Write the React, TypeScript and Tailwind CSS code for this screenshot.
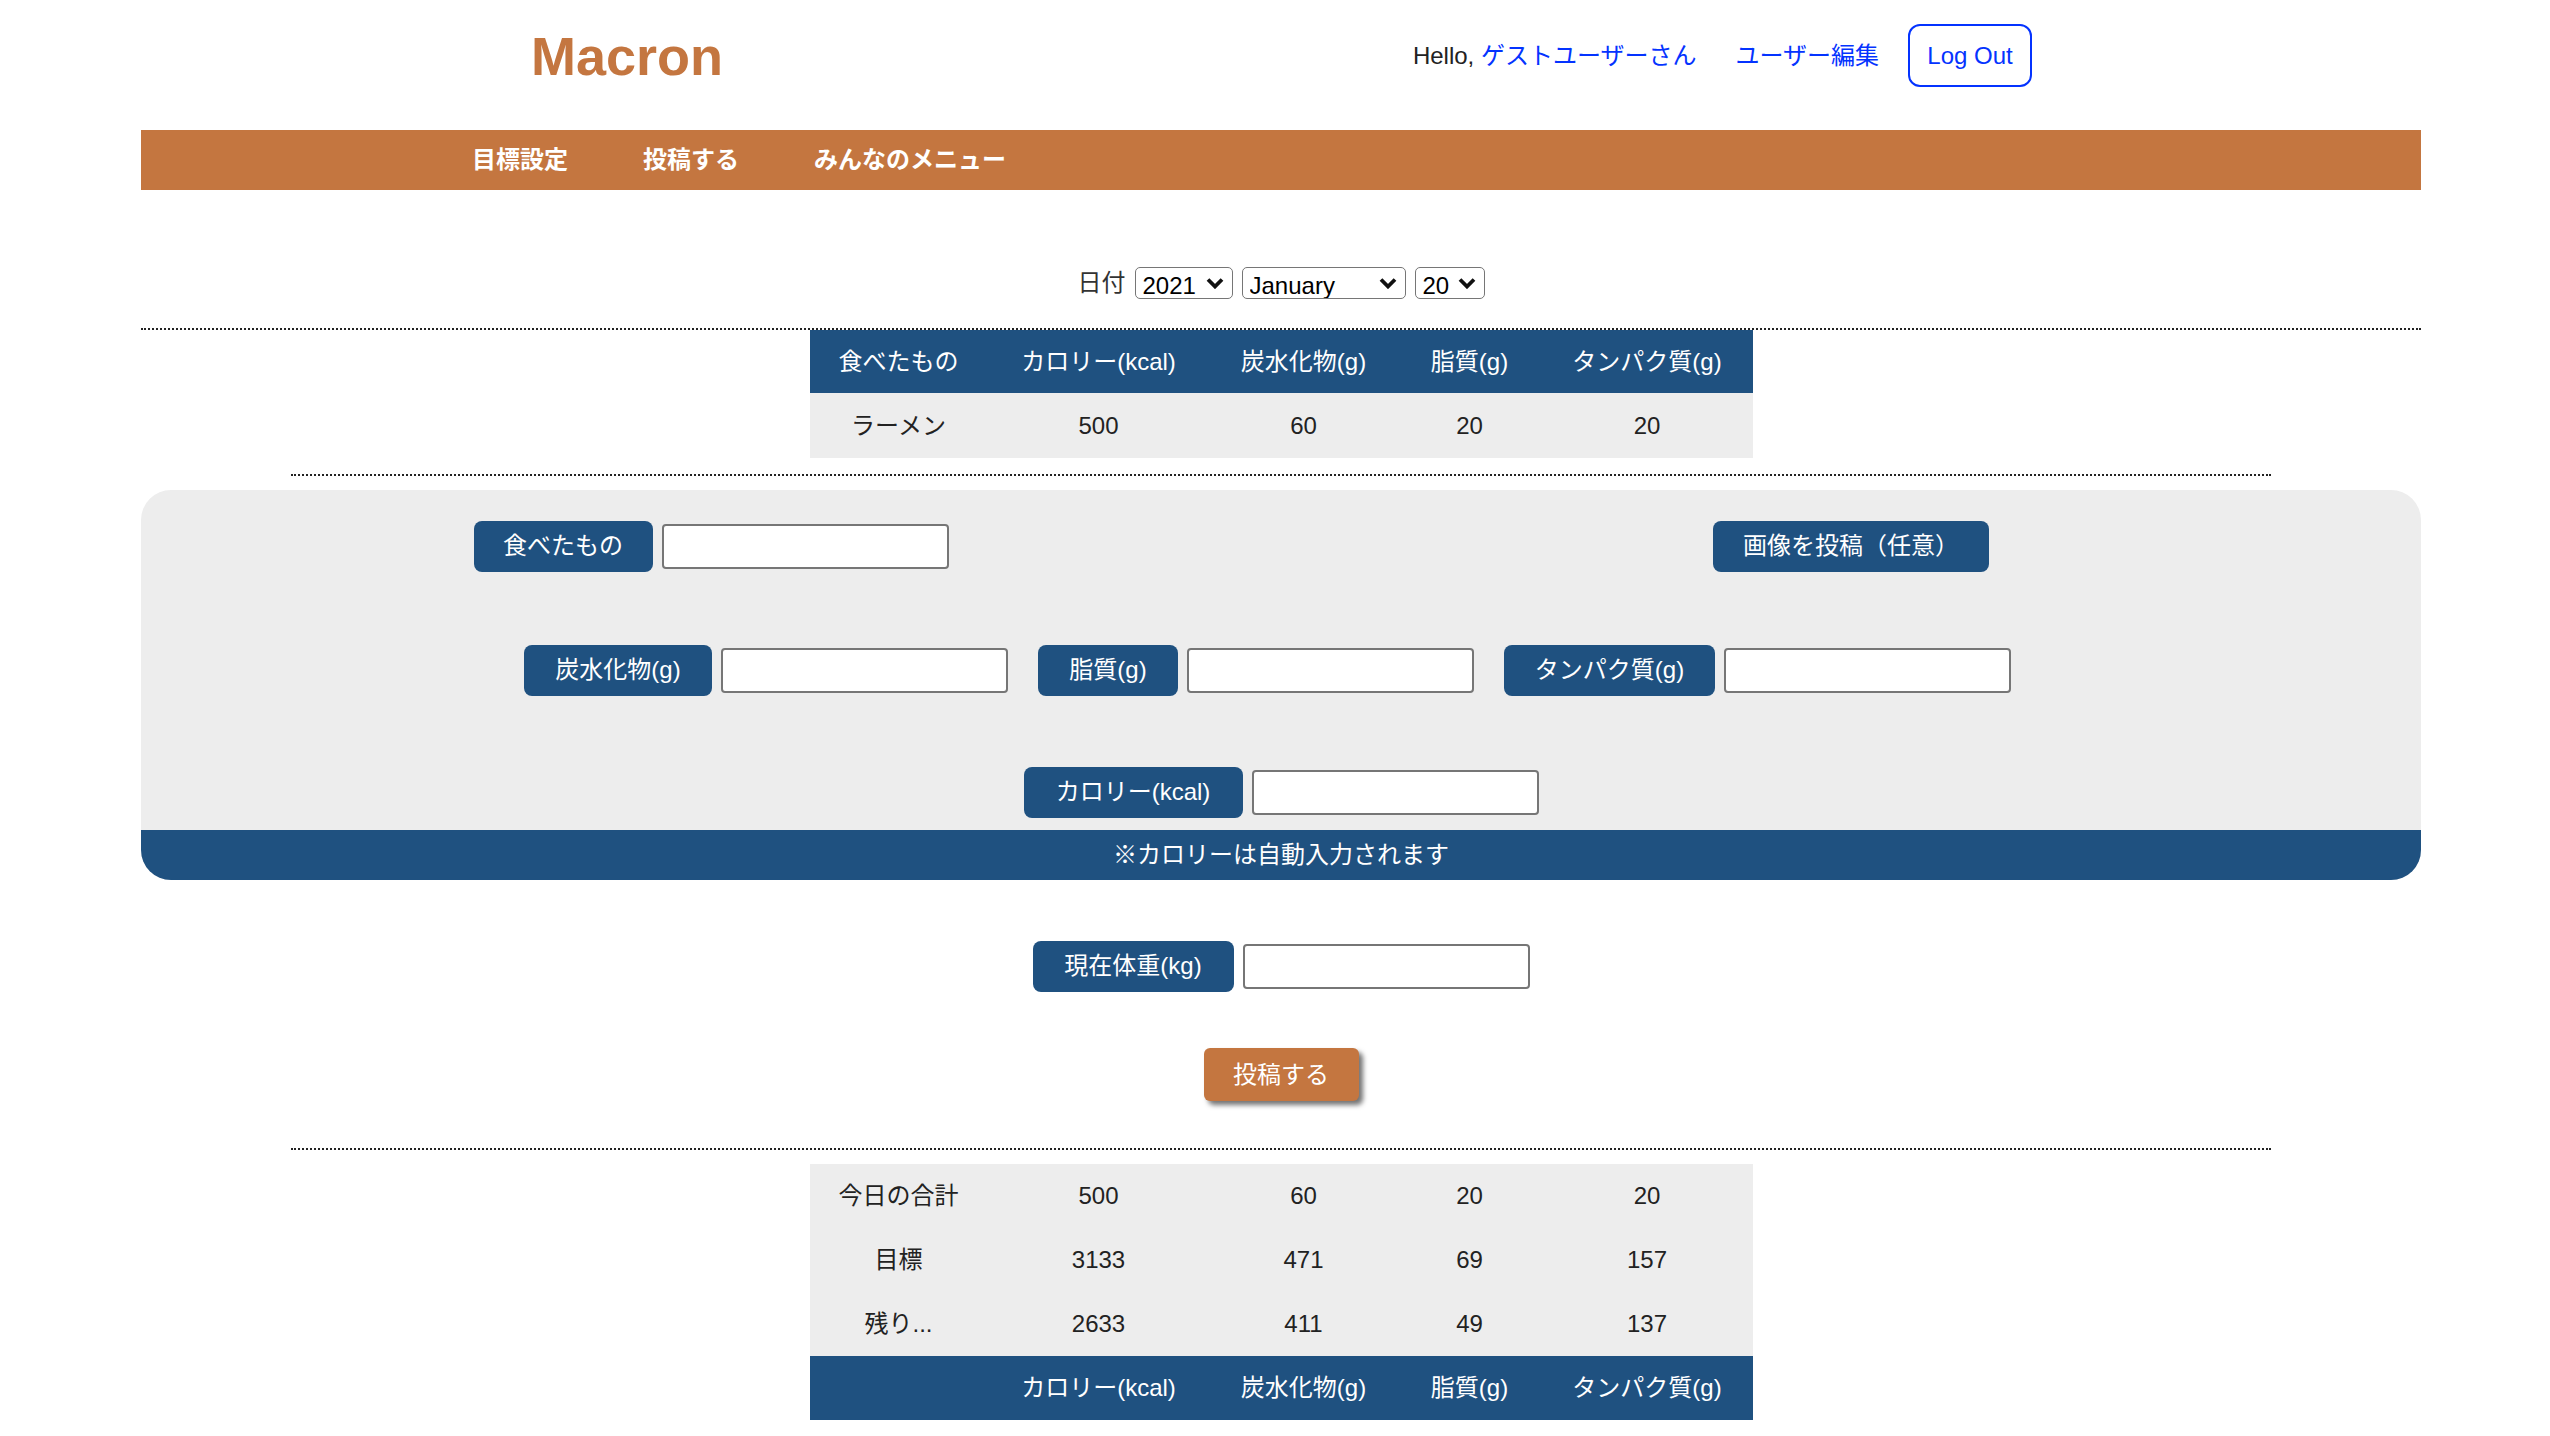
import React from 'react'

function Chevron() {
  return (
    <svg
      className="pointer-events-none absolute right-[8px] top-1/2 -translate-y-1/2"
      width="18"
      height="12"
      viewBox="0 0 18 12"
      fill="none"
    >
      <polyline points="2,2.5 9,9.5 16,2.5" stroke="#111" strokeWidth="3.8" />
    </svg>
  )
}

function Select({ value, options, width }: { value: string; options: string[]; width: string }) {
  return (
    <div className={`relative h-[32px] rounded-[5px] border border-[#767676] bg-white ${width}`}>
      <select
        defaultValue={value}
        className="h-full w-full appearance-none bg-transparent pl-[7px] text-[24px] leading-none text-black outline-none"
      >
        {options.map((o) => (
          <option key={o}>{o}</option>
        ))}
      </select>
      <Chevron />
    </div>
  )
}

function Label({ children, width }: { children: React.ReactNode; width: string }) {
  return (
    <span
      className={`flex h-[51px] shrink-0 items-center justify-center rounded-[8px] bg-[#1f5180] text-[24px] text-white ${width}`}
    >
      {children}
    </span>
  )
}

function TextBox() {
  return <input type="text" className="h-[45px] w-[287px] rounded-[4px] border-2 border-[#767676] bg-white" />
}

function Field({ label, width }: { label: string; width: string }) {
  return (
    <div className="flex items-center gap-[9px]">
      <Label width={width}>{label}</Label>
      <TextBox />
    </div>
  )
}

function Cols() {
  return (
    <colgroup>
      <col className="w-[178px]" />
      <col className="w-[222px]" />
      <col className="w-[188px]" />
      <col className="w-[144px]" />
      <col className="w-[211px]" />
    </colgroup>
  )
}

export default function App() {
  const heads = ['カロリー(kcal)', '炭水化物(g)', '脂質(g)', 'タンパク質(g)']
  const summary = [
    { label: '今日の合計', values: ['500', '60', '20', '20'] },
    { label: '目標', values: ['3133', '471', '69', '157'] },
    { label: '残り...', values: ['2633', '411', '49', '137'] },
  ]

  return (
    <div className="min-h-screen bg-white pl-[141px] font-['Liberation_Sans','Noto_Sans_CJK_JP',sans-serif] text-[#222]">
      <div className="w-[2280px]">
        {/* header */}
        <header className="flex h-[111px] items-center justify-between pl-[390px] pr-[389px]">
          <h1 className="text-[54px] font-bold leading-none text-[#c47640]">Macron</h1>
          <div className="flex items-center text-[24px]">
            <span className="text-[#222]">
              Hello, <a className="text-[#0433ff]">ゲストユーザーさん</a>
            </span>
            <a className="ml-[39px] text-[#0433ff]">ユーザー編集</a>
            <button className="ml-[29px] flex h-[63px] w-[124px] items-center justify-center rounded-[12px] border-2 border-[#0433ff] text-[24px] text-[#0433ff]">
              Log Out
            </button>
          </div>
        </header>

        <nav className="mt-[19px] flex h-[60px] items-center gap-[75px] bg-[#c47640] pl-[331px] text-[24px] font-bold text-white">
          <a>目標設定</a>
          <a>投稿する</a>
          <a>みんなのメニュー</a>
        </nav>

        {/* date */}
        <div className="mt-[77px] flex h-[32px] items-center justify-center gap-[9px] text-[24px]">
          <span className="text-[#333]">日付</span>
          <Select value="2021" options={['2020', '2021', '2022']} width="w-[98px]" />
          <Select value="January" options={['January', 'February', 'March']} width="w-[164px]" />
          <Select value="20" options={['19', '20', '21']} width="w-[70px]" />
        </div>

        <div className="mt-[29px] border-t-2 border-dotted border-[#222]" />

        <table className="mx-auto w-[943px] table-fixed border-collapse text-center text-[24px]">
          <Cols />
          <thead>
            <tr className="h-[63px] bg-[#1f5180] text-white">
              <th className="font-normal">食べたもの</th>
              {heads.map((h) => (
                <th key={h} className="font-normal">
                  {h}
                </th>
              ))}
            </tr>
          </thead>
          <tbody>
            <tr className="h-[65px] bg-[#ededed] text-[#222]">
              <td>ラーメン</td>
              <td>500</td>
              <td>60</td>
              <td>20</td>
              <td>20</td>
            </tr>
          </tbody>
        </table>

        <div className="mx-auto mt-[16px] w-[1980px] border-t-2 border-dotted border-[#222]" />

        {/* form panel */}
        <div className="mt-[14px] overflow-hidden rounded-[30px] bg-[#ededed] pt-[30px]">
          <div className="grid h-[52px] grid-cols-2 items-center">
            <div className="flex justify-center">
              <Field label="食べたもの" width="w-[179px]" />
            </div>
            <div className="flex justify-center">
              <Label width="w-[276px]">画像を投稿（任意）</Label>
            </div>
          </div>
          <div className="mt-[72px] flex h-[52px] items-center gap-[30px] pl-[383px]">
            <Field label="炭水化物(g)" width="w-[188px]" />
            <Field label="脂質(g)" width="w-[140px]" />
            <Field label="タンパク質(g)" width="w-[211px]" />
          </div>
          <div className="mt-[70px] flex h-[52px] items-center justify-center">
            <Field label="カロリー(kcal)" width="w-[219px]" />
          </div>
          <div className="mt-[12px] flex h-[50px] items-center justify-center bg-[#1f5180] text-[24px] text-white">
            ※カロリーは自動入力されます
          </div>
        </div>

        <div className="mt-[60px] flex h-[52px] items-center justify-center">
          <Field label="現在体重(kg)" width="w-[201px]" />
        </div>

        <button className="mx-auto mt-[56px] flex h-[53px] w-[155px] items-center justify-center rounded-[6px] bg-[#c47640] text-[24px] text-white shadow-[4px_4px_5px_rgba(0,0,0,0.55)]">
          投稿する
        </button>

        <div className="mx-auto mt-[47px] w-[1980px] border-t-2 border-dotted border-[#222]" />

        <table className="mx-auto mt-[14px] w-[943px] table-fixed border-collapse text-center text-[24px]">
          <Cols />
          <tbody>
            {summary.map((r) => (
              <tr key={r.label} className="h-[64px] bg-[#ededed] text-[#222]">
                <td>{r.label}</td>
                {r.values.map((v, i) => (
                  <td key={i}>{v}</td>
                ))}
              </tr>
            ))}
            <tr className="h-[64px] bg-[#1f5180] text-white">
              <td></td>
              {heads.map((h) => (
                <td key={h}>{h}</td>
              ))}
            </tr>
          </tbody>
        </table>
      </div>
    </div>
  )
}
